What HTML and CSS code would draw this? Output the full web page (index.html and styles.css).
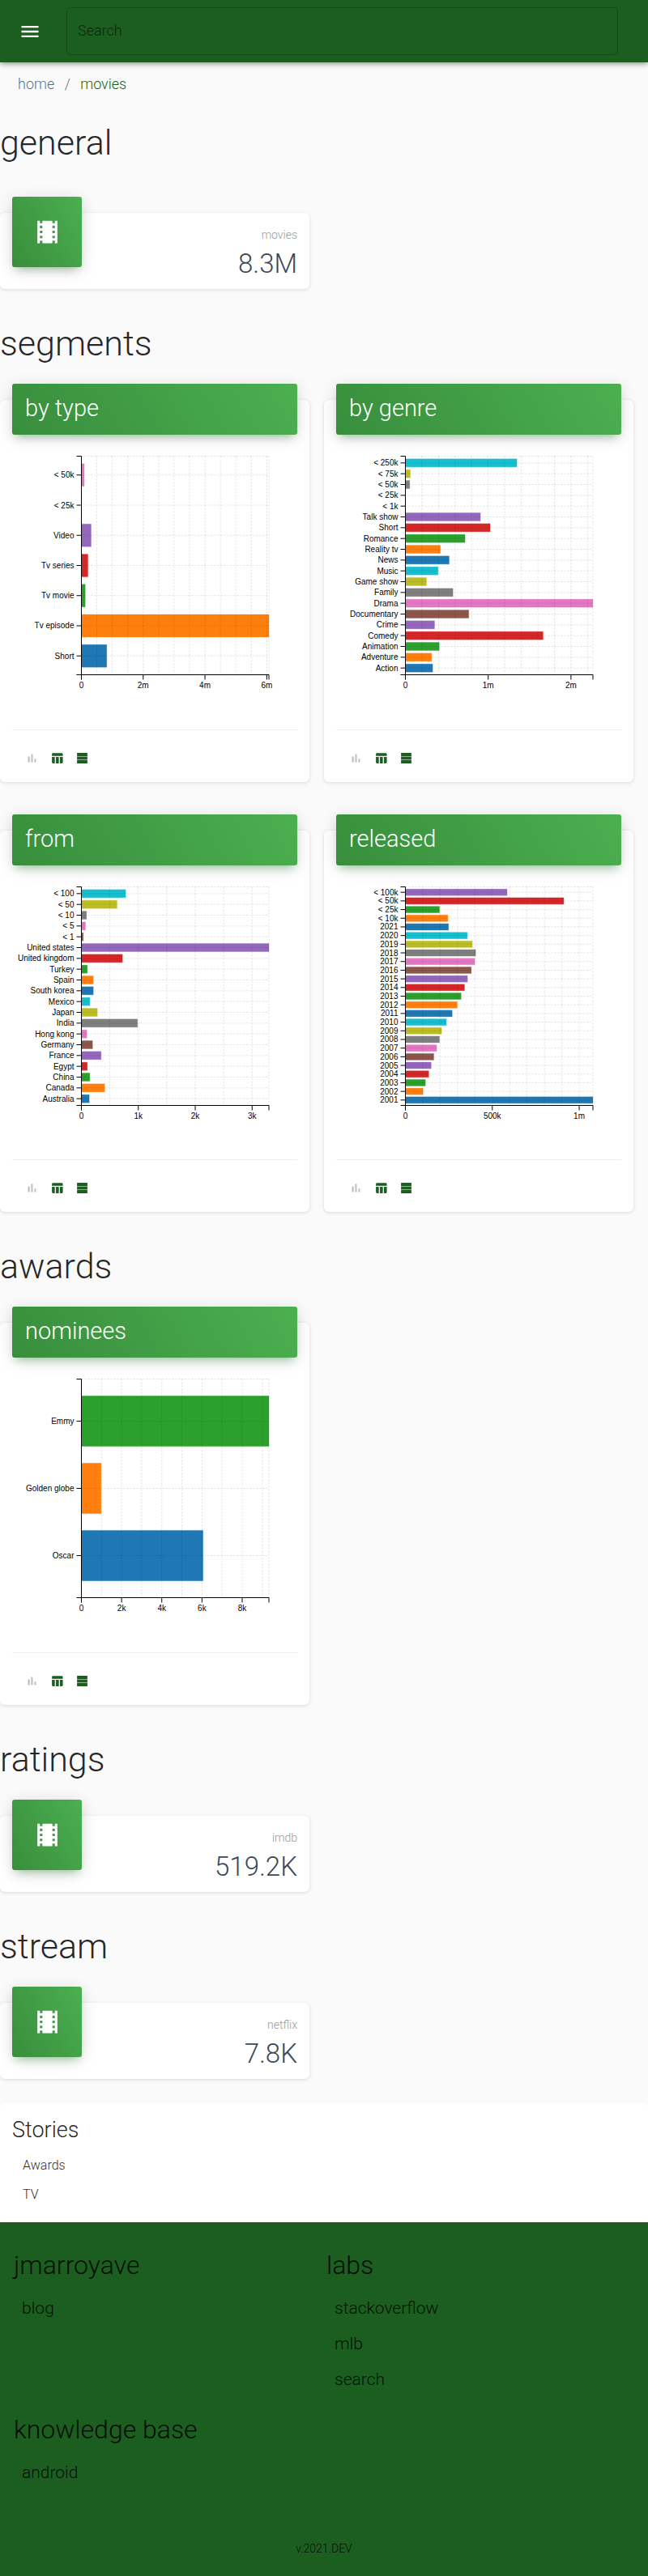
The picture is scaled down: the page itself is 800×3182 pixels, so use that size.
FILE: index.html
```html
<!DOCTYPE html>
<html lang="en">
<head>
    <meta charset="UTF-8">
    <title>movies</title>
    <link rel="stylesheet" href="styles.css">
</head>
<body>
    <svg class="sprite">
        <symbol id="icon-film" viewBox="0 0 24 24"><path d="M18 3v2h-2V3H8v2H6V3H4v18h2v-2h2v2h8v-2h2v2h2V3h-2zM8 17H6v-2h2v2zm0-4H6v-2h2v2zm0-4H6V7h2v2zm10 8h-2v-2h2v2zm0-4h-2v-2h2v2zm0-4h-2V7h2v2z"/></symbol>
        <symbol id="icon-bars" viewBox="0 0 24 24"><path d="M5 9.2h3V19H5zM10.6 5h2.8v14h-2.8zm5.6 8H19v6h-2.8z"/></symbol>
        <symbol id="icon-table" viewBox="0 0 24 24"><path d="M10 10.02h5V21h-5zM17 21h3c1.1 0 2-.9 2-2v-9h-5v11zm3-18H5c-1.1 0-2 .9-2 2v3h19V5c0-1.1-.9-2-2-2zM3 19c0 1.1.9 2 2 2h3V10H3v9z"/></symbol>
        <symbol id="icon-rows" viewBox="0 0 24 24"><path d="M3 2.7h18v5.6H3zM3 9.2h18v5.6H3zM3 15.7h18v5.6H3z"/></symbol>
    </svg>

    <header class="topbar">
        <button class="menu-btn" type="button">
            <svg viewBox="0 0 24 24"><path d="M3 18h18v-2H3v2zm0-5h18v-2H3v2zm0-7v2h18V6H3z"/></svg>
        </button>
        <div class="search-box">Search</div>
    </header>

    <nav class="breadcrumb">
        <a href="#">home</a>
        <span class="breadcrumb-sep">/</span>
        <a href="#" class="breadcrumb-current">movies</a>
    </nav>

    <main class="content">
        <section class="section section-general">
            <h2>general</h2>
            <div class="stat-card">
                <div class="stat-icon"><svg><use href="#icon-film"/></svg></div>
                <div class="stat-text">
                    <p class="stat-label">movies</p>
                    <p class="stat-value">8.3M</p>
                </div>
            </div>
        </section>

        <section class="section">
            <h2>segments</h2>
            <div class="chart-grid">
                <div class="chart-card">
                    <div class="card-header">by type</div>
                    <div class="chart" data-chart="type"></div>
                    <div class="card-actions">
                        <svg class="off"><use href="#icon-bars"/></svg>
                        <svg><use href="#icon-table"/></svg>
                        <svg><use href="#icon-rows"/></svg>
                    </div>
                </div>
                <div class="chart-card">
                    <div class="card-header">by genre</div>
                    <div class="chart" data-chart="genre"></div>
                    <div class="card-actions">
                        <svg class="off"><use href="#icon-bars"/></svg>
                        <svg><use href="#icon-table"/></svg>
                        <svg><use href="#icon-rows"/></svg>
                    </div>
                </div>
                <div class="chart-card">
                    <div class="card-header">from</div>
                    <div class="chart" data-chart="from"></div>
                    <div class="card-actions">
                        <svg class="off"><use href="#icon-bars"/></svg>
                        <svg><use href="#icon-table"/></svg>
                        <svg><use href="#icon-rows"/></svg>
                    </div>
                </div>
                <div class="chart-card">
                    <div class="card-header">released</div>
                    <div class="chart" data-chart="released"></div>
                    <div class="card-actions">
                        <svg class="off"><use href="#icon-bars"/></svg>
                        <svg><use href="#icon-table"/></svg>
                        <svg><use href="#icon-rows"/></svg>
                    </div>
                </div>
            </div>
        </section>

        <section class="section">
            <h2>awards</h2>
            <div class="chart-grid">
                <div class="chart-card">
                    <div class="card-header">nominees</div>
                    <div class="chart" data-chart="nominees"></div>
                    <div class="card-actions">
                        <svg class="off"><use href="#icon-bars"/></svg>
                        <svg><use href="#icon-table"/></svg>
                        <svg><use href="#icon-rows"/></svg>
                    </div>
                </div>
            </div>
        </section>

        <section class="section">
            <h2>ratings</h2>
            <div class="stat-card">
                <div class="stat-icon"><svg><use href="#icon-film"/></svg></div>
                <div class="stat-text">
                    <p class="stat-label">imdb</p>
                    <p class="stat-value">519.2K</p>
                </div>
            </div>
        </section>

        <section class="section">
            <h2>stream</h2>
            <div class="stat-card">
                <div class="stat-icon"><svg><use href="#icon-film"/></svg></div>
                <div class="stat-text">
                    <p class="stat-label">netflix</p>
                    <p class="stat-value">7.8K</p>
                </div>
            </div>
        </section>
    </main>

    <section class="stories">
        <h3>Stories</h3>
        <ul>
            <li><a href="#">Awards</a></li>
            <li><a href="#">TV</a></li>
        </ul>
    </section>

    <footer class="footer">
        <div class="footer-grid">
            <div>
                <h4>jmarroyave</h4>
                <ul>
                    <li><a href="#">blog</a></li>
                </ul>
            </div>
            <div>
                <h4>labs</h4>
                <ul>
                    <li><a href="#">stackoverflow</a></li>
                    <li><a href="#">mlb</a></li>
                    <li><a href="#">search</a></li>
                </ul>
            </div>
            <div>
                <h4>knowledge base</h4>
                <ul>
                    <li><a href="#">android</a></li>
                </ul>
            </div>
        </div>
        <p class="version">v.2021.DEV</p>
    </footer>

    <script src="charts.js"></script>
</body>
</html>
```

FILE: styles.css
```css
* {
    box-sizing: border-box;
}
body {
    font-family: Roboto, "Liberation Sans", sans-serif;
    font-weight: 300;
    background-color: #fafafa;
    color: rgba(0, 0, 0, 0.87);
    margin: 0;
    padding: 0;
}
a {
    color: inherit;
    text-decoration: none;
}
ul {
    list-style: none;
    margin: 0;
    padding: 0;
}
.sprite {
    display: none;
}

/* top bar */
.topbar {
    display: flex;
    align-items: center;
    height: 77px;
    padding: 0 37px 0 23px;
    background-color: #1b5e20;
    box-shadow: 0 2px 4px -1px rgba(0, 0, 0, 0.2), 0 4px 5px rgba(0, 0, 0, 0.14), 0 1px 10px rgba(0, 0, 0, 0.12);
    position: relative;
}
.menu-btn {
    width: 28px;
    height: 28px;
    padding: 0;
    margin-right: 31px;
    border: none;
    background: none;
    fill: #fff;
}
.search-box {
    flex: 1;
    height: 59px;
    margin-top: -1px;
    padding: 15px 13px 0;
    font-size: 18px;
    line-height: 26px;
    color: rgba(0, 0, 0, 0.6);
    border: 1px solid rgba(0, 0, 0, 0.23);
    border-radius: 4px;
}

.breadcrumb {
    height: 38px;
    padding: 16px 0 0 22px;
    font-size: 18px;
    line-height: 22px;
    color: rgba(0, 0, 0, 0.6);
}
.breadcrumb-sep {
    margin: 0 8px;
}
.breadcrumb-current {
    color: #1b5e20;
}

.content {
    width: 782px;
}
.section {
    padding-top: 41px;
}
.section h2 {
    margin: 0 0 44px;
    font-size: 43px;
    font-weight: 300;
    line-height: 52px;
}
.section-general {
    padding-top: 35px;
}
.section-general h2 {
    margin-bottom: 61px;
}

/* stat cards */
.stat-card {
    display: flex;
    justify-content: space-between;
    width: 382px;
    height: 94px;
    padding: 0 15px;
    background: #fff;
    border-radius: 6px;
    box-shadow: 0 1px 4px rgba(0, 0, 0, 0.14);
}
.stat-icon {
    display: flex;
    align-items: center;
    justify-content: center;
    width: 86px;
    height: 87px;
    margin-top: -20px;
    background: linear-gradient(60deg, #388e3c, #4caf50);
    border-radius: 3px;
    box-shadow: 0 4px 20px rgba(0, 0, 0, 0.14), 0 7px 10px -5px rgba(56, 142, 60, 0.4);
}
.stat-icon svg {
    width: 37px;
    height: 37px;
    fill: #fff;
}
.stat-text {
    text-align: right;
    padding-top: 15px;
}
.stat-label {
    margin: 0;
    font-size: 14px;
    line-height: 24px;
    color: #999;
}
.stat-value {
    margin: 2px 0 0;
    font-size: 33px;
    line-height: 44px;
    color: #3c4858;
}

/* chart cards */
.chart-grid {
    display: grid;
    grid-template-columns: 382px 382px;
    column-gap: 18px;
    row-gap: 60px;
}
.chart-card {
    background: #fff;
    border-radius: 6px;
    box-shadow: 0 1px 4px rgba(0, 0, 0, 0.14);
}
.card-header {
    height: 63px;
    margin: -20px 15px 0;
    padding: 0 16px;
    font-size: 29px;
    line-height: 60px;
    color: #fff;
    background: linear-gradient(60deg, #388e3c, #4caf50);
    border-radius: 3px;
    box-shadow: 0 4px 20px rgba(0, 0, 0, 0.14), 0 7px 10px -5px rgba(56, 142, 60, 0.4);
}
.chart {
    height: 364.5px;
    margin: 0 15px;
    border-bottom: 1px solid #eee;
}
.chart svg {
    display: block;
}
.chart text {
    font-family: "Liberation Sans", Arial, sans-serif;
    font-size: 10px;
    fill: #000;
}
.card-actions {
    display: flex;
    gap: 14px;
    height: 64px;
    padding: 26px 0 0 31px;
}
.card-actions svg {
    width: 17px;
    height: 17px;
    fill: #1b5e20;
}
.card-actions svg.off {
    fill: #bdbdbd;
}

/* stories */
.stories {
    height: 147px;
    margin-top: 30px;
    padding: 15px 15px 0;
    background: #fff;
    border-radius: 6px;
}
.stories h3 {
    margin: 0 0 8px;
    font-size: 27px;
    font-weight: 300;
    line-height: 36px;
}
.stories li {
    padding-left: 13px;
    font-size: 16px;
    line-height: 36px;
}

/* footer */
.footer {
    height: 438px;
    padding: 32px 17px 0;
    background-color: #1b5e20;
    color: rgba(0, 0, 0, 0.87);
}
.footer-grid {
    display: grid;
    grid-template-columns: 386px 1fr;
    row-gap: 19px;
}
.footer h4 {
    margin: 0 0 10px;
    font-size: 32px;
    font-weight: 300;
    line-height: 42px;
}
.footer li {
    padding-left: 10px;
    font-size: 21px;
    line-height: 44px;
}
.version {
    margin: 62px 0 0;
    font-size: 14px;
    line-height: 20px;
    text-align: center;
}
```

FILE: charts.js
```js
const colors = ['#1f77b4', '#ff7f0e', '#2ca02c', '#d62728', '#9467bd', '#8c564b', '#e377c2', '#7f7f7f', '#bcbd22', '#17becf'];

// rows go bottom to top, values are the raw counts
const charts = {
    type: {
        grid: 500000, ticks: 2000000, suffix: 'm', div: 1000000,
        rows: [['Short', 820000], ['Tv episode', 6070000], ['Tv movie', 123000], ['Tv series', 210000], ['Video', 314000], ['< 25k', 0], ['< 50k', 92000]]
    },
    genre: {
        grid: 200000, ticks: 1000000, suffix: 'm', div: 1000000,
        rows: [['Action', 329000], ['Adventure', 316000], ['Animation', 408000], ['Comedy', 1662000], ['Crime', 352000], ['Documentary', 765000], ['Drama', 2265000], ['Family', 574000], ['Game show', 254000], ['Music', 394000], ['News', 528000], ['Reality tv', 423000], ['Romance', 720000], ['Short', 1023000], ['Talk show', 906000], ['< 1k', 0], ['< 25k', 0], ['< 50k', 52000], ['< 75k', 59000], ['< 250k', 1346000]]
    },
    from: {
        grid: 500, ticks: 1000, suffix: 'k', div: 1000,
        rows: [['Australia', 137], ['Canada', 408], ['China', 147], ['Egypt', 104], ['France', 346], ['Germany', 195], ['Hong kong', 95], ['India', 986], ['Japan', 280], ['Mexico', 147], ['South korea', 209], ['Spain', 209], ['Turkey', 104], ['United kingdom', 721], ['United states', 3295], ['< 1', 33], ['< 5', 71], ['< 10', 90], ['< 50', 626], ['< 100', 778]]
    },
    released: {
        grid: 100000, ticks: 500000, suffix: 'k', div: 1000,
        rows: [['2001', 1079000], ['2002', 101000], ['2003', 115000], ['2004', 134000], ['2005', 148000], ['2006', 163000], ['2007', 180000], ['2008', 196000], ['2009', 208000], ['2010', 236000], ['2011', 269000], ['2012', 298000], ['2013', 320000], ['2014', 340000], ['2015', 357000], ['2016', 379000], ['2017', 399000], ['2018', 404000], ['2019', 385000], ['2020', 356000], ['2021', 248000], ['< 10k', 244000], ['< 25k', 196000], ['< 50k', 911000], ['< 100k', 585000]]
    },
    nominees: {
        grid: 1000, ticks: 2000, suffix: 'k', div: 1000,
        rows: [['Oscar', 6050], ['Golden globe', 980], ['Emmy', 9330]]
    }
};

const left = 85.5;
const top_ = 26.5;
const plotW = 231.5;
const plotH = 270;

function el(parent, name, attrs, txt) {
    const node = document.createElementNS('http://www.w3.org/2000/svg', name);
    for (const k in attrs) node.setAttribute(k, attrs[k]);
    if (txt !== undefined) node.textContent = txt;
    parent.appendChild(node);
    return node;
}

function tickLabel(v, cfg) {
    if (v === 0) return '0';
    if (cfg.suffix === 'k' && v >= 1000000) return (v / 1000000) + 'm';
    return (v / cfg.div) + cfg.suffix;
}

function drawChart(box, cfg) {
    const svg = el(box, 'svg', { width: 352, height: 340 });
    const max = Math.max(...cfg.rows.map(r => r[1]));
    const sx = v => left + v / max * plotW;
    const bottom = top_ + plotH;
    const step = plotH / (cfg.rows.length + 0.25);
    const band = step * 0.75;

    cfg.rows.forEach((r, i) => {
        const y = bottom - step * 0.25 - band - i * step;
        const color = colors[i % colors.length];
        el(svg, 'rect', { x: left, y: y, width: sx(r[1]) - left, height: band, fill: color, stroke: color, 'stroke-opacity': 0.3 });
    });

    // dotted grid goes over the bars
    const gridAttrs = { stroke: 'rgba(0,0,0,0.13)', 'stroke-dasharray': '2 2' };
    for (let v = cfg.grid; v <= max; v += cfg.grid) {
        el(svg, 'line', { x1: sx(v), x2: sx(v), y1: top_, y2: bottom, ...gridAttrs });
    }
    el(svg, 'line', { x1: left + plotW, x2: left + plotW, y1: top_, y2: bottom, ...gridAttrs });
    el(svg, 'line', { x1: left, x2: left + plotW, y1: top_, y2: top_, ...gridAttrs });

    cfg.rows.forEach((r, i) => {
        const y = bottom - step * 0.25 - band / 2 - i * step;
        el(svg, 'line', { x1: left, x2: left + plotW, y1: y, y2: y, ...gridAttrs });
        el(svg, 'line', { x1: left - 6, x2: left, y1: y, y2: y, stroke: '#000' });
        el(svg, 'text', { x: left - 9, y: y + 3.5, 'text-anchor': 'end' }, r[0]);
    });

    // axes with their outer ticks
    el(svg, 'path', { d: `M${left - 6} ${top_}H${left}V${bottom}H${left - 6}`, fill: 'none', stroke: '#000' });
    el(svg, 'path', { d: `M${left} ${bottom + 6}V${bottom}H${left + plotW}V${bottom + 6}`, fill: 'none', stroke: '#000' });

    for (let v = 0; v <= max; v += cfg.ticks) {
        el(svg, 'line', { x1: sx(v), x2: sx(v), y1: bottom, y2: bottom + 6, stroke: '#000' });
        el(svg, 'text', { x: sx(v), y: bottom + 16.5, 'text-anchor': 'middle' }, tickLabel(v, cfg));
    }
}

document.querySelectorAll('[data-chart]').forEach(box => drawChart(box, charts[box.dataset.chart]));
```
